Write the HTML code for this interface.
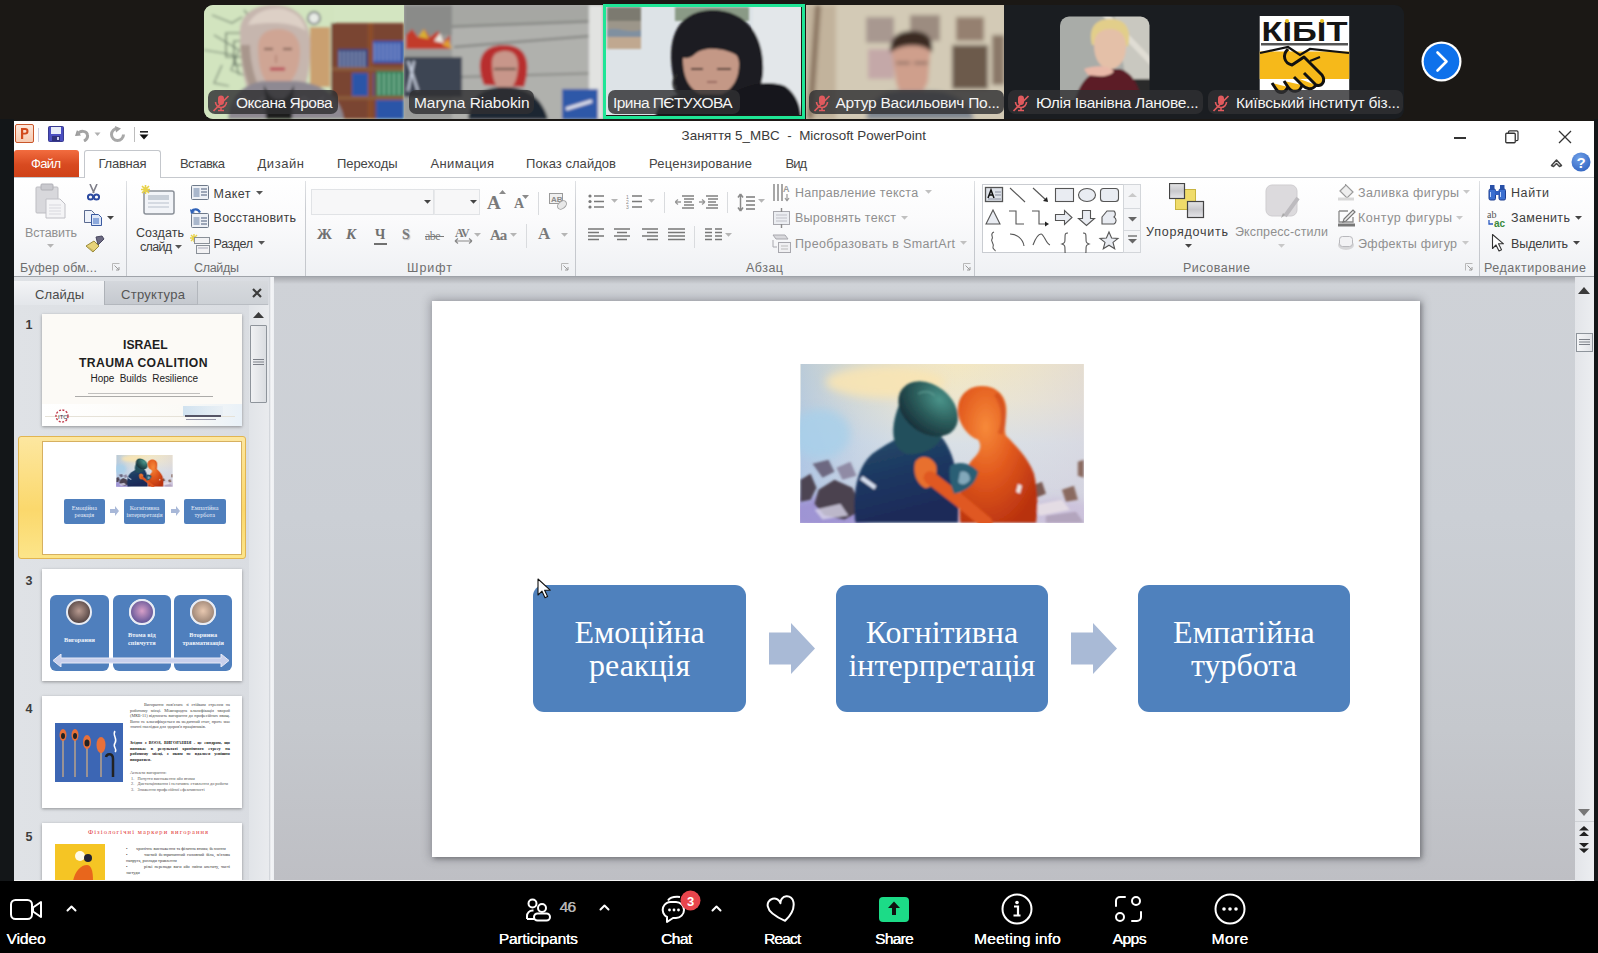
<!DOCTYPE html>
<html><head><meta charset="utf-8">
<style>
*{box-sizing:border-box;margin:0;padding:0}
html,body{width:1598px;height:953px;overflow:hidden;background:#1b1815;font-family:"Liberation Sans",sans-serif;position:relative}
.abs{position:absolute}
/* video strip */
.tile{position:absolute;top:5px;height:114px;overflow:hidden}
.lbl{position:absolute;bottom:5px;height:24px;border-radius:6px;background:rgba(28,28,28,.72);color:#fff;font-size:15px;line-height:24px;white-space:nowrap;padding-left:26px;padding-right:5px}
.mute{position:absolute;left:6px;top:4px;width:16px;height:16px}
/* ppt */
#ppt{position:absolute;left:14px;top:121px;width:1580px;height:760px;background:#fff;overflow:hidden}
.tab{position:absolute;top:35px;height:22px;font-size:13px;color:#444;line-height:22px}
.rb{position:absolute;font-size:13px;color:#333;white-space:nowrap}
.gl{position:absolute;top:138px;font-size:13px;color:#6d6d6d;white-space:nowrap}
.gsep{position:absolute;top:62px;width:1px;height:94px;background:#dadce0}
/* zoom bar */
#zb{position:absolute;left:0;top:881px;width:1598px;height:72px;background:#000}
.zl{position:absolute;top:49px;color:#fff;font-size:15px;white-space:nowrap}
</style></head><body>

<div style="position:absolute;left:204px;top:5px;width:200px;height:114px;overflow:hidden;border-radius:9px 0 0 9px"><svg width="200" height="114" viewBox="0 0 200 114" style="display:block"><defs><filter id="b1" x="-20%" y="-20%" width="140%" height="140%"><feGaussianBlur stdDeviation="1.6"/></filter></defs><rect width="200" height="114" fill="#d3e5c1"/>
<g filter="url(#b1)">
<rect x="0" y="0" width="130" height="114" fill="#d2e4bf"/>
<path d="M8 10l20 8 10-6M10 30l25 15 -8 20 25 10M0 45l30 5 5 20M18 60l-8 18 15 3M40 5l12 14" stroke="#6a7a6a" stroke-width="1.2" fill="none"/>
<path d="M22 28l24 0 0 24 -24 0z M30 36l24 0 0 24 -24 0z" stroke="#5a6a5a" stroke-width="1.2" fill="none"/>
<rect x="106" y="22" width="20" height="60" fill="#caa070"/>
<circle cx="110" cy="13" r="6" fill="#e8ece6" stroke="#556" stroke-width="1.5"/>
<rect x="127" y="18" width="73" height="96" fill="#7a4531"/>
<rect x="134" y="44" width="30" height="20" fill="#2a3f7c"/>
<path d="M136 46v17M140 46v17M144 46v17M148 46v17M152 46v17M156 46v17M160 46v17" stroke="#d8dce8" stroke-width="1"/>
<rect x="168" y="36" width="32" height="22" fill="#2c4fa8"/>
<path d="M171 38v18M175 38v18M179 38v18M183 38v18M187 38v18M191 38v18M195 38v18" stroke="#c8d4f0" stroke-width="1"/>
<rect x="148" y="68" width="22" height="24" fill="#2c55a8"/>
<rect x="172" y="66" width="28" height="26" fill="#2c7e55"/>
<path d="M175 68v22M180 68v22M185 68v22M190 68v22M195 68v22" stroke="#c8e8d4" stroke-width="1"/>
<rect x="172" y="95" width="28" height="19" fill="#2c55a8"/>
<rect x="164" y="18" width="5" height="96" fill="#8c4e2c"/>
<rect x="127" y="62" width="73" height="4" fill="#8a5a3a"/>
<rect x="127" y="91" width="73" height="4" fill="#8a5a3a"/>
<path d="M36 30 C34 6 56 -2 74 0 C96 2 108 18 106 44 C106 62 104 74 100 84 L44 86 C38 70 36 50 36 30z" fill="#c6b6ae"/>
<path d="M44 20 C50 6 66 2 80 4 C94 8 100 16 102 26 C90 18 70 16 44 20z" fill="#ddd0c6"/>
<path d="M36 40 C38 60 42 76 48 86 L56 86 C50 70 46 56 46 40z" fill="#a8968c"/>
<path d="M54 42 C54 30 62 24 74 24 C88 24 96 32 96 46 C96 64 90 80 74 82 C60 82 54 66 54 42z" fill="#cfa594"/>
<path d="M60 44h9M79 44h9" stroke="#7a5a50" stroke-width="2"/>
<path d="M72 50 v8" stroke="#b88878" stroke-width="2"/>
<path d="M66 64h15" stroke="#b84a58" stroke-width="3"/>
<path d="M24 114 C26 90 40 78 60 76 L92 76 C116 78 136 90 140 114z" fill="#8e8992"/>
<path d="M30 100 l10-8 l10 8 l10-8 l10 8 l10-8 l10 8 l10-8 l10 8 l10-8" stroke="#b8b4bc" stroke-width="2" fill="none"/>
<path d="M60 80 C64 90 70 94 74 94 C80 94 86 90 90 80 L88 114 H62z" fill="#1c1a1e"/>
</g></svg></div>
<div style="position:absolute;left:208.4px;top:90px;width:129.99999999999997px;height:24px;background:rgba(48,48,50,.82);border-radius:7px"></div><svg style="position:absolute;left:212.4px;top:93.5px;" width="18" height="18" viewBox="0 0 18 18"><rect x="6" y="1.5" width="6" height="9.5" rx="3" fill="#e05a5e"/><path d="M3.5 8a5.5 5.5 0 0 0 11 0M9 13.5V16.5M6 16.5h6" stroke="#e05a5e" stroke-width="1.6" fill="none"/><path d="M1.5 17L16.5 2" stroke="#e05a5e" stroke-width="1.7"/></svg><div style="position:absolute;left:236.0px;top:95.3px;font-family:'Liberation Sans',sans-serif;font-size:15.5px;line-height:15.5px;color:#f4f4f4;white-space:pre;letter-spacing:-0.48px;">Оксана Ярова</div>
<div style="position:absolute;left:404px;top:5px;width:199px;height:114px;overflow:hidden;"><svg width="199" height="114" viewBox="0 0 199 114" style="display:block"><defs><filter id="b2" x="-20%" y="-20%" width="140%" height="140%"><feGaussianBlur stdDeviation="1.4"/></filter></defs><rect width="199" height="114" fill="#acadaa"/>
<g filter="url(#b2)">
<path d="M40 0h160v114H40z" fill="#b0b1ad"/>
<path d="M40 0h160v16L40 22z" fill="#a6a7a3"/>
<path d="M40 22L199 16" stroke="#7e7f7c" stroke-width="2"/>
<path d="M50 42L199 30" stroke="#7e7f7c" stroke-width="2"/>
<path d="M55 72L199 68" stroke="#888985" stroke-width="2"/>
<path d="M185 0h14v114h-14z" fill="#e2e3e1"/>
<rect x="0" y="0" width="48" height="114" fill="#9b9c9a"/>
<rect x="0" y="0" width="48" height="30" fill="#8a8b89"/>
<path d="M2 30l6-6 6 8 6-8 6 8 8-6 6 10 6-6v14H2z" fill="#c23a2a"/>
<path d="M14 32l6-8 5 10z" fill="#d8b030"/>
<path d="M30 36l6-8 4 10z" fill="#e8e8e0"/>
<path d="M38 40l6-6 4 10z" fill="#e0a030"/>
<rect x="0" y="52" width="58" height="40" fill="#3e4452"/>
<path d="M4 56l10 30M10 56l-6 30" stroke="#d0d8e8" stroke-width="2"/>
<path d="M80 80 C72 60 74 40 100 40 C126 40 126 62 120 82z" fill="#b82e2e"/>
<path d="M88 58 C88 48 94 46 102 46 C110 46 114 52 114 60 C114 76 108 86 100 86 C92 86 88 74 88 58z" fill="#c8968a"/>
<path d="M90 64h22" stroke="#332" stroke-width="1.5"/>
<path d="M64 114 C66 92 78 82 100 82 C122 82 138 92 144 114z" fill="#1f2633"/>
<rect x="158" y="84" width="36" height="30" fill="#2e58a8"/>
<path d="M162 104l26-8" stroke="#e8e8f0" stroke-width="3"/>
</g></svg></div>
<div style="position:absolute;left:409px;top:90px;width:125px;height:24px;background:rgba(48,48,50,.82);border-radius:7px"></div><div style="position:absolute;left:414.0px;top:95.3px;font-family:'Liberation Sans',sans-serif;font-size:15.5px;line-height:15.5px;color:#f4f4f4;white-space:pre;letter-spacing:-0.05px;">Maryna Riabokin</div>
<div style="position:absolute;left:603px;top:4px;width:202px;height:115px;border:3.5px solid #1fe596;overflow:hidden"><svg width="195" height="108" viewBox="3 3 195 108" style="display:block"><defs><filter id="b3" x="-20%" y="-20%" width="140%" height="140%"><feGaussianBlur stdDeviation="1.3"/></filter></defs><rect width="202" height="114" fill="#dde3e7"/>
<g filter="url(#b3)">
<rect x="150" y="0" width="52" height="114" fill="#e3e7ea"/>
<rect x="4" y="3" width="34" height="42" fill="#9c968a"/>
<rect x="4" y="3" width="34" height="14" fill="#7c7a70"/>
<path d="M4 26 C14 22 24 30 38 26 V35 H4z" fill="#8090a0"/>
<rect x="4" y="33" width="34" height="12" fill="#c0a890"/>
<rect x="72" y="3" width="74" height="14" fill="#8a9a86"/>
<path d="M70 72 C64 40 70 8 108 6 C146 6 162 34 160 70 C158 84 154 92 148 96 L80 96 C74 90 72 82 70 72z" fill="#1d1c21"/>
<path d="M80 56 C80 46 90 42 108 42 C126 42 136 48 136 60 C136 80 124 92 108 92 C92 92 80 80 80 56z" fill="#c49886"/>
<path d="M78 52 C84 34 100 28 118 32 C130 34 138 44 138 54 C128 46 104 40 92 50 C88 54 82 56 78 52z" fill="#1d1c21"/>
<path d="M88 65h12M114 65h14" stroke="#4a3430" stroke-width="2.2"/>
<path d="M104 78h10" stroke="#9a6a60" stroke-width="2"/>
<path d="M74 70 C68 78 70 88 80 92" stroke="#2a2a2a" stroke-width="2.5" fill="none"/>
<path d="M52 114 C56 96 70 88 92 90 L126 90 C140 84 160 74 182 82 C194 90 198 104 198 114z" fill="#16151a"/>
</g></svg></div>
<div style="position:absolute;left:608px;top:90px;width:132px;height:24px;background:rgba(48,48,50,.82);border-radius:7px"></div><div style="position:absolute;left:613.0px;top:95.3px;font-family:'Liberation Sans',sans-serif;font-size:15.5px;line-height:15.5px;color:#f4f4f4;white-space:pre;letter-spacing:-0.55px;">Ірина ПЄТУХОВА</div>
<div style="position:absolute;left:806px;top:5px;width:198px;height:114px;overflow:hidden;"><svg width="198" height="114" viewBox="0 0 198 114" style="display:block"><defs><filter id="b4" x="-20%" y="-20%" width="140%" height="140%"><feGaussianBlur stdDeviation="2.2"/></filter></defs><rect width="198" height="114" fill="#cfc6b1"/>
<g filter="url(#b4)">
<rect x="0" y="0" width="198" height="114" fill="#d3cab6"/>
<rect x="0" y="0" width="30" height="114" fill="#c2b39c"/>
<path d="M12 0 L4 114" stroke="#8a7460" stroke-width="6"/>
<rect x="60" y="12" width="28" height="26" fill="#a89890"/>
<rect x="62" y="44" width="26" height="30" fill="#c4a8a8"/>
<rect x="104" y="10" width="30" height="26" fill="#9c8c80"/>
<rect x="150" y="12" width="28" height="24" fill="#958070"/>
<rect x="146" y="40" width="36" height="44" fill="#6c5a4c"/>
<rect x="186" y="30" width="12" height="50" fill="#8a7868"/>
<g transform="translate(-6,2)"><path d="M92 46 C90 32 98 26 112 26 C126 26 132 34 130 48 L128 74 C124 86 118 90 112 90 C104 90 98 86 96 74z" fill="#cf9f8c"/>
<path d="M90 46 C90 28 100 24 112 24 C126 24 134 30 132 46 C126 36 100 36 90 46z" fill="#3a2a22"/>
<path d="M96 56h14M114 56h14" stroke="#6a5a50" stroke-width="2"/></g>
<path d="M60 114 C62 96 76 86 96 86 L128 86 C150 88 164 98 168 114z" fill="#7e8590"/>
</g></svg></div>
<div style="position:absolute;left:808.5px;top:90px;width:195.20000000000005px;height:24px;background:rgba(48,48,50,.82);border-radius:7px"></div><svg style="position:absolute;left:812.5px;top:93.5px;" width="18" height="18" viewBox="0 0 18 18"><rect x="6" y="1.5" width="6" height="9.5" rx="3" fill="#e05a5e"/><path d="M3.5 8a5.5 5.5 0 0 0 11 0M9 13.5V16.5M6 16.5h6" stroke="#e05a5e" stroke-width="1.6" fill="none"/><path d="M1.5 17L16.5 2" stroke="#e05a5e" stroke-width="1.7"/></svg><div style="position:absolute;left:835.5px;top:95.3px;font-family:'Liberation Sans',sans-serif;font-size:15.5px;line-height:15.5px;color:#f4f4f4;white-space:pre;letter-spacing:-0.24px;">Артур Васильович По...</div>
<div style="position:absolute;left:1004px;top:5px;width:200px;height:114px;overflow:hidden;"><svg width="200" height="114" viewBox="0 0 200 114" style="display:block"><rect width="200" height="114" fill="#1a1d21"/>
<defs><clipPath id="c5"><path d="M56 95V20.5a9 9 0 0 1 9-9h71.5a9 9 0 0 1 9 9V95z"/></clipPath><filter id="b5"><feGaussianBlur stdDeviation="1.3"/></filter></defs>
<g clip-path="url(#c5)"><g filter="url(#b5)">
<rect x="50" y="8" width="100" height="110" fill="#a9aca8"/>
<path d="M110 8h40v110h-20z" fill="#c9c8c0"/>
<path d="M100 8 L150 60" stroke="#e0ddd4" stroke-width="6"/>
<rect x="130" y="74" width="20" height="40" fill="#2a2a2c"/>
<path d="M88 40 C84 22 92 14 106 14 C122 14 128 24 124 42 L118 38 C110 30 96 30 90 40z" fill="#e2ce8a"/>
<path d="M90 40 C90 28 98 24 106 24 C116 24 122 30 122 42 C122 56 114 64 106 64 C98 64 90 56 90 40z" fill="#e4c0a8"/>
<path d="M68 114 C70 86 80 68 100 64 L116 64 C130 68 138 84 140 114z" fill="#5c1c26"/>
<path d="M80 64 C92 60 104 60 110 66 C106 72 96 72 84 70z" fill="#e8b8a8"/>
</g></g></svg></div>
<div style="position:absolute;left:1008px;top:90px;width:194.70000000000005px;height:24px;background:rgba(48,48,50,.82);border-radius:7px"></div><svg style="position:absolute;left:1012px;top:93.5px;" width="18" height="18" viewBox="0 0 18 18"><rect x="6" y="1.5" width="6" height="9.5" rx="3" fill="#e05a5e"/><path d="M3.5 8a5.5 5.5 0 0 0 11 0M9 13.5V16.5M6 16.5h6" stroke="#e05a5e" stroke-width="1.6" fill="none"/><path d="M1.5 17L16.5 2" stroke="#e05a5e" stroke-width="1.7"/></svg><div style="position:absolute;left:1036.0px;top:95.3px;font-family:'Liberation Sans',sans-serif;font-size:15.5px;line-height:15.5px;color:#f4f4f4;white-space:pre;letter-spacing:-0.27px;">Юлія Іванівна Ланове...</div>
<div style="position:absolute;left:1204px;top:5px;width:200px;height:114px;overflow:hidden;border-radius:0 9px 9px 0"><svg width="200" height="114" viewBox="0 0 200 114" style="display:block"><rect width="200" height="114" fill="#1a1d21"/>
<rect x="55.7" y="11" width="89.5" height="84" fill="#fff"/>
<rect x="55.7" y="46.5" width="89.5" height="27.5" fill="#f6b91a"/>

<text x="100.5" y="35.5" text-anchor="middle" font-family="Liberation Sans" font-weight="bold" font-size="27" fill="#151515" textLength="86" lengthAdjust="spacingAndGlyphs">КІБІТ</text>
<circle cx="83" cy="16" r="2" fill="#e8c020"/><circle cx="118" cy="16" r="2" fill="#e8c020"/>
<rect x="57" y="38" width="87" height="2.5" fill="#555"/>
<path d="M56 48 L84 42 L96 50 L106 44 L145 48" stroke="#111" stroke-width="2.2" fill="none"/>
<path d="M84 44 C78 50 80 58 88 60 L100 52 L118 70 C122 76 118 82 112 80 L100 68 M112 80 C108 86 102 84 98 80 L90 72 M98 80 C96 88 88 88 84 82 L80 76 M84 82 C80 90 74 88 72 84 L68 78" stroke="#111" stroke-width="3" fill="#f6b91a" stroke-linejoin="round"/>
<path d="M106 56 L116 52" stroke="#111" stroke-width="2.2"/></svg></div>
<div style="position:absolute;left:1208px;top:90px;width:194.70000000000005px;height:24px;background:rgba(48,48,50,.82);border-radius:7px"></div><svg style="position:absolute;left:1212px;top:93.5px;" width="18" height="18" viewBox="0 0 18 18"><rect x="6" y="1.5" width="6" height="9.5" rx="3" fill="#e05a5e"/><path d="M3.5 8a5.5 5.5 0 0 0 11 0M9 13.5V16.5M6 16.5h6" stroke="#e05a5e" stroke-width="1.6" fill="none"/><path d="M1.5 17L16.5 2" stroke="#e05a5e" stroke-width="1.7"/></svg><div style="position:absolute;left:1236.0px;top:95.3px;font-family:'Liberation Sans',sans-serif;font-size:15.5px;line-height:15.5px;color:#f4f4f4;white-space:pre;letter-spacing:-0.19px;">Київський інститут біз...</div>
<svg style="position:absolute;left:1421px;top:41px;" width="41" height="41" viewBox="0 0 41 41"><circle cx="20.5" cy="20.5" r="20" fill="#fff"/><circle cx="20.5" cy="20.5" r="17.8" fill="#0e71eb"/><path d="M16.5 11.5 L25.5 20.5 L16.5 29.5" stroke="#fff" stroke-width="2.6" fill="none" stroke-linecap="round" stroke-linejoin="round"/></svg>
<div style="position:absolute;left:0px;top:119px;width:14px;height:762px;background:#131618"></div>
<div style="position:absolute;left:1594px;top:119px;width:4px;height:762px;background:#131618"></div>
<div style="position:absolute;left:14px;top:121px;width:1580px;height:760px;background:#fff"></div>
<svg style="position:absolute;left:15px;top:124px;" width="19" height="19" viewBox="0 0 19 19"><defs><linearGradient id="pg" x1="0" y1="0" x2="0" y2="1"><stop offset="0" stop-color="#fde8dc"/><stop offset="1" stop-color="#f6c9b0"/></linearGradient></defs><rect x="0.5" y="0.5" width="18" height="18" rx="1.5" fill="url(#pg)" stroke="#c9562a"/><path d="M6 15V4h4.2a3.3 3.3 0 0 1 0 6.6H8.2V15z M8.2 6v2.7h1.9a1.35 1.35 0 0 0 0-2.7z" fill="#d24a1c"/></svg>
<div style="position:absolute;left:38px;top:128px;width:1px;height:14px;background:#cfcfe0"></div>
<svg style="position:absolute;left:48px;top:126px;" width="16" height="16" viewBox="0 0 16 16"><rect x="0.5" y="0.5" width="15" height="15" rx="1" fill="#4a4ec0" stroke="#383a90"/><rect x="3" y="1" width="10" height="7" fill="#e8ecf8"/><rect x="4" y="10" width="8" height="5" fill="#2e307a"/><rect x="9" y="11" width="2" height="3" fill="#c8cce8"/></svg>
<svg style="position:absolute;left:73px;top:126px;" width="17" height="16" viewBox="0 0 17 16"><path d="M4 4 L2 10 L8 9.5" fill="#9a9a9a"/><path d="M4.5 8.5 C7 4 14 4.5 14.5 9 C15 12 13 14 11 15" stroke="#a3a3a3" stroke-width="3" fill="none"/></svg>
<svg style="position:absolute;left:94px;top:132px;" width="7" height="5" viewBox="0 0 7 5"><path d="M0.5 0.5h6L3.5 4z" fill="#b0b0b0"/></svg>
<svg style="position:absolute;left:109px;top:126px;" width="17" height="16" viewBox="0 0 17 16"><path d="M8.5 2.5a6 6 0 1 0 6 6" stroke="#a8a8a8" stroke-width="3" fill="none"/><path d="M6 0 L12 2.5 L7 6.5z" fill="#a0a0a0"/></svg>
<div style="position:absolute;left:134px;top:127px;width:1px;height:15px;background:#bdbdbd"></div>
<svg style="position:absolute;left:139px;top:130px;" width="10" height="11" viewBox="0 0 10 11"><rect x="1" y="1" width="8" height="1.6" fill="#222"/><path d="M0.5 4.5h9L5 9.5z" fill="#111"/></svg>
<div style="position:absolute;left:681.6px;top:129.3px;font-family:'Liberation Sans',sans-serif;font-size:13.4px;line-height:13.4px;color:#3a3a3a;white-space:pre;letter-spacing:0.01px;">Заняття 5_MBC  -  Microsoft PowerPoint</div>
<div style="position:absolute;left:1454px;top:137px;width:12px;height:1.5px;background:#333"></div>
<svg style="position:absolute;left:1505px;top:130px;" width="14" height="14" viewBox="0 0 14 14"><rect x="0.75" y="3.25" width="9.5" height="9.5" rx="1" fill="none" stroke="#333" stroke-width="1.3"/><path d="M3.5 3 V2 a1.2 1.2 0 0 1 1.2-1.2 H11.8 a1.2 1.2 0 0 1 1.2 1.2 V9.5 a1.2 1.2 0 0 1 -1.2 1.2 H11" fill="none" stroke="#333" stroke-width="1.2"/></svg>
<svg style="position:absolute;left:1558px;top:130px;" width="14" height="14" viewBox="0 0 14 14"><path d="M1 1L13 13M13 1L1 13" stroke="#333" stroke-width="1.3"/></svg>
<svg style="position:absolute;left:1550px;top:157px;" width="13" height="11" viewBox="0 0 13 11"><path d="M1.5 8.5 L6.5 3 L11.5 8.5 L9.5 9.5 L6.5 6.5 L3.5 9.5z" fill="none" stroke="#444" stroke-width="1.5" stroke-linejoin="round"/></svg>
<svg style="position:absolute;left:1571px;top:152px;" width="20" height="20" viewBox="0 0 20 20"><defs><radialGradient id="hg" cx="0.4" cy="0.3" r="0.8"><stop offset="0" stop-color="#6fa0e8"/><stop offset="1" stop-color="#2f62c0"/></radialGradient></defs><circle cx="10" cy="10" r="9.5" fill="url(#hg)"/><text x="10" y="15.5" text-anchor="middle" font-family="Liberation Sans" font-weight="bold" font-size="15" fill="#fff">?</text></svg>
<div style="position:absolute;left:14px;top:150px;width:65px;height:27px;background:linear-gradient(#f26c3f,#d84a20 55%,#cf4218);border-radius:3px 3px 0 0"></div>
<div style="position:absolute;left:31.0px;top:156.5px;font-family:'Liberation Sans',sans-serif;font-size:13.0px;line-height:13.0px;color:#fff;white-space:pre;letter-spacing:-0.65px;">Файл</div>
<div style="position:absolute;left:84px;top:150px;width:77px;height:28px;background:#fff;border:1px solid #c4c7cc;border-bottom:none;border-radius:3px 3px 0 0;z-index:2"></div>
<div style="position:absolute;left:98.5px;top:156.5px;font-family:'Liberation Sans',sans-serif;font-size:13.0px;line-height:13.0px;color:#444;white-space:pre;letter-spacing:-0.25px;z-index:3">Главная</div>
<div style="position:absolute;left:180.0px;top:156.5px;font-family:'Liberation Sans',sans-serif;font-size:13.0px;line-height:13.0px;color:#444;white-space:pre;letter-spacing:-0.55px;">Вставка</div>
<div style="position:absolute;left:257.5px;top:156.5px;font-family:'Liberation Sans',sans-serif;font-size:13.0px;line-height:13.0px;color:#444;white-space:pre;letter-spacing:0.56px;">Дизайн</div>
<div style="position:absolute;left:337.0px;top:156.5px;font-family:'Liberation Sans',sans-serif;font-size:13.0px;line-height:13.0px;color:#444;white-space:pre;letter-spacing:-0.07px;">Переходы</div>
<div style="position:absolute;left:430.5px;top:156.5px;font-family:'Liberation Sans',sans-serif;font-size:13.0px;line-height:13.0px;color:#444;white-space:pre;letter-spacing:0.35px;">Анимация</div>
<div style="position:absolute;left:526.0px;top:156.5px;font-family:'Liberation Sans',sans-serif;font-size:13.0px;line-height:13.0px;color:#444;white-space:pre;letter-spacing:0.04px;">Показ слайдов</div>
<div style="position:absolute;left:649.0px;top:156.5px;font-family:'Liberation Sans',sans-serif;font-size:13.0px;line-height:13.0px;color:#444;white-space:pre;letter-spacing:0.20px;">Рецензирование</div>
<div style="position:absolute;left:785.6px;top:156.5px;font-family:'Liberation Sans',sans-serif;font-size:13.0px;line-height:13.0px;color:#444;white-space:pre;letter-spacing:-1.06px;">Вид</div>
<div style="position:absolute;left:14px;top:177px;width:1580px;height:101px;background:linear-gradient(#ffffff 0%,#fbfbfc 40%,#eff1f4 100%);border-top:1px solid #c6c9ce;border-bottom:2px solid #9fa3a9"></div>
<div style="position:absolute;left:126px;top:181px;width:1px;height:95px;background:linear-gradient(#dfe1e4,#c9ccd1 30%,#c4c7cc)"></div>
<div style="position:absolute;left:305px;top:181px;width:1px;height:95px;background:linear-gradient(#dfe1e4,#c9ccd1 30%,#c4c7cc)"></div>
<div style="position:absolute;left:575px;top:181px;width:1px;height:95px;background:linear-gradient(#dfe1e4,#c9ccd1 30%,#c4c7cc)"></div>
<div style="position:absolute;left:974px;top:181px;width:1px;height:95px;background:linear-gradient(#dfe1e4,#c9ccd1 30%,#c4c7cc)"></div>
<div style="position:absolute;left:1479px;top:181px;width:1px;height:95px;background:linear-gradient(#dfe1e4,#c9ccd1 30%,#c4c7cc)"></div>
<svg style="position:absolute;left:112px;top:263px;" width="8" height="8" viewBox="0 0 8 8"><path d="M0.5 7.5V0.5H7.5" stroke="#b8b8b8" fill="none"/><path d="M2.5 2.5L7 7M7 4v3H4" stroke="#9a9a9a" fill="none"/></svg>
<svg style="position:absolute;left:561px;top:263px;" width="8" height="8" viewBox="0 0 8 8"><path d="M0.5 7.5V0.5H7.5" stroke="#b8b8b8" fill="none"/><path d="M2.5 2.5L7 7M7 4v3H4" stroke="#9a9a9a" fill="none"/></svg>
<svg style="position:absolute;left:963px;top:263px;" width="8" height="8" viewBox="0 0 8 8"><path d="M0.5 7.5V0.5H7.5" stroke="#b8b8b8" fill="none"/><path d="M2.5 2.5L7 7M7 4v3H4" stroke="#9a9a9a" fill="none"/></svg>
<svg style="position:absolute;left:1465px;top:263px;" width="8" height="8" viewBox="0 0 8 8"><path d="M0.5 7.5V0.5H7.5" stroke="#b8b8b8" fill="none"/><path d="M2.5 2.5L7 7M7 4v3H4" stroke="#9a9a9a" fill="none"/></svg>
<div style="position:absolute;left:20.0px;top:261.6px;font-family:'Liberation Sans',sans-serif;font-size:12.5px;line-height:12.5px;color:#6e6e6e;white-space:pre;letter-spacing:0.22px;">Буфер обм...</div>
<div style="position:absolute;left:194.0px;top:261.6px;font-family:'Liberation Sans',sans-serif;font-size:12.5px;line-height:12.5px;color:#6e6e6e;white-space:pre;letter-spacing:-0.31px;">Слайды</div>
<div style="position:absolute;left:407.0px;top:261.6px;font-family:'Liberation Sans',sans-serif;font-size:12.5px;line-height:12.5px;color:#6e6e6e;white-space:pre;letter-spacing:0.97px;">Шрифт</div>
<div style="position:absolute;left:746.0px;top:261.6px;font-family:'Liberation Sans',sans-serif;font-size:12.5px;line-height:12.5px;color:#6e6e6e;white-space:pre;letter-spacing:0.48px;">Абзац</div>
<div style="position:absolute;left:1183.0px;top:261.6px;font-family:'Liberation Sans',sans-serif;font-size:12.5px;line-height:12.5px;color:#6e6e6e;white-space:pre;letter-spacing:0.51px;">Рисование</div>
<div style="position:absolute;left:1484.0px;top:261.6px;font-family:'Liberation Sans',sans-serif;font-size:12.5px;line-height:12.5px;color:#6e6e6e;white-space:pre;letter-spacing:0.52px;">Редактирование</div>
<svg style="position:absolute;left:35px;top:183px;" width="32" height="36" viewBox="0 0 32 36"><rect x="1" y="4" width="22" height="26" rx="1" fill="#d8d8dc" stroke="#bdbdc2"/><rect x="6" y="1" width="12" height="6" rx="1" fill="#c9c9ce" stroke="#b0b0b6"/><path d="M11 16h14l5 5v14H11z" fill="#f4f4f6" stroke="#c0c0c6"/><path d="M14 22h12M14 25h12M14 28h12M14 31h12" stroke="#d8d8de"/></svg>
<div style="position:absolute;left:25.0px;top:226.9px;font-family:'Liberation Sans',sans-serif;font-size:12.5px;line-height:12.5px;color:#8f8f8f;white-space:pre;letter-spacing:-0.14px;">Вставить</div>
<svg style="position:absolute;left:47px;top:244px;" width="7" height="4" viewBox="0 0 7 4"><path d="M0 0h7L3.5 3.8z" fill="#b5b5b5"/></svg>
<svg style="position:absolute;left:87px;top:184px;" width="13" height="17" viewBox="0 0 13 17"><path d="M3 0L7 9M10 0L6 9" stroke="#7d7d88" stroke-width="1.6"/><circle cx="3.5" cy="13" r="2.6" fill="none" stroke="#2c4aa0" stroke-width="2"/><circle cx="9.5" cy="13" r="2.6" fill="none" stroke="#2c4aa0" stroke-width="2"/></svg>
<svg style="position:absolute;left:84px;top:210px;" width="19" height="16" viewBox="0 0 19 16"><path d="M0.5 0.5h7l3 3v9h-10z" fill="#eef2fa" stroke="#5a6a90"/><path d="M7.5 4.5h7l3 3v8h-10z" fill="#dfe8f8" stroke="#3a5aa0"/><path d="M9 9h6M9 11h6M9 13h6" stroke="#3a6ac0"/></svg>
<svg style="position:absolute;left:107px;top:216px;" width="7" height="4" viewBox="0 0 7 4"><path d="M0 0h7L3.5 3.8z" fill="#444"/></svg>
<svg style="position:absolute;left:84px;top:235px;" width="21" height="18" viewBox="0 0 21 18"><path d="M12 2l6-1 2 3-6 6z" fill="#6a6880" stroke="#4a4860"/><path d="M2 11l8-5 5 5-6 6z" fill="#e7d37a" stroke="#9a8a3a"/><path d="M4 12l6 4" stroke="#c7b35a"/></svg>
<svg style="position:absolute;left:140px;top:185px;" width="36" height="31" viewBox="0 0 36 31"><rect x="4" y="6" width="30" height="23" rx="2" fill="#f2f4f8" stroke="#8a9098" stroke-width="1.5"/><rect x="8" y="10" width="21" height="5" fill="#c8cfd8"/><path d="M8 18h21M8 22h21" stroke="#b8c0cc"/><path d="M2 1l7 7M9 1L2 8M5.5 0v9M1 4.5h9" stroke="#e8d24a" stroke-width="1.6"/></svg>
<div style="position:absolute;left:136.0px;top:226.6px;font-family:'Liberation Sans',sans-serif;font-size:12.5px;line-height:12.5px;color:#3d3d3d;white-space:pre;letter-spacing:0.08px;">Создать</div>
<div style="position:absolute;left:140.0px;top:241.4px;font-family:'Liberation Sans',sans-serif;font-size:12.5px;line-height:12.5px;color:#3d3d3d;white-space:pre;letter-spacing:-0.69px;">слайд</div>
<svg style="position:absolute;left:175px;top:245px;" width="7" height="4" viewBox="0 0 7 4"><path d="M0 0h7L3.5 3.8z" fill="#555"/></svg>
<svg style="position:absolute;left:191px;top:185px;" width="18" height="15" viewBox="0 0 18 15"><rect x="0.5" y="0.5" width="17" height="14" rx="1" fill="#eef1f6" stroke="#6f7a8a"/><rect x="2.5" y="3" width="6" height="9" fill="#a9b7cc"/><path d="M10 4h6M10 7h6M10 10h6" stroke="#4a5a78"/></svg>
<div style="position:absolute;left:213.6px;top:187.8px;font-family:'Liberation Sans',sans-serif;font-size:12.5px;line-height:12.5px;color:#3d3d3d;white-space:pre;letter-spacing:0.36px;">Макет</div>
<svg style="position:absolute;left:256px;top:191px;" width="7" height="4" viewBox="0 0 7 4"><path d="M0 0h7L3.5 3.8z" fill="#555"/></svg>
<svg style="position:absolute;left:190px;top:208px;" width="20" height="20" viewBox="0 0 20 20"><rect x="1.5" y="5.5" width="17" height="14" rx="1" fill="#eef1f6" stroke="#6f7a8a"/><rect x="3.5" y="9" width="6" height="8" fill="#a9b7cc"/><path d="M11 10h6M11 13h6M11 16h6" stroke="#4a5a78"/><path d="M1 3.5c3-3 7-3 9 1" stroke="#2f62b8" stroke-width="2.2" fill="none"/><path d="M0 1l1 5 4-2z" fill="#2f62b8"/></svg>
<div style="position:absolute;left:213.6px;top:212.4px;font-family:'Liberation Sans',sans-serif;font-size:12.5px;line-height:12.5px;color:#3d3d3d;white-space:pre;letter-spacing:0.21px;">Восстановить</div>
<svg style="position:absolute;left:190px;top:233px;" width="20" height="21" viewBox="0 0 20 21"><path d="M1 2l6 6M7 2L1 8M4 1v8M0 5h8" stroke="#e8d24a" stroke-width="1.4"/><rect x="4.5" y="4.5" width="15" height="6" fill="#f2f2f4" stroke="#8a9098"/><rect x="6.5" y="12.5" width="13" height="8" fill="#f2f2f4" stroke="#8a9098"/><path d="M8 15h10" stroke="#aab"/></svg>
<div style="position:absolute;left:213.6px;top:237.9px;font-family:'Liberation Sans',sans-serif;font-size:12.5px;line-height:12.5px;color:#3d3d3d;white-space:pre;letter-spacing:-0.38px;">Раздел</div>
<svg style="position:absolute;left:258px;top:241px;" width="7" height="4" viewBox="0 0 7 4"><path d="M0 0h7L3.5 3.8z" fill="#555"/></svg>
<div style="position:absolute;left:311px;top:189px;width:123px;height:26px;background:#f7f7f8;border:1px solid #e1e3e6"></div>
<div style="position:absolute;left:434px;top:189px;width:46px;height:26px;background:#f7f7f8;border:1px solid #e1e3e6;border-left:1px solid #e8e9eb"></div>
<svg style="position:absolute;left:424px;top:200px;" width="7" height="4" viewBox="0 0 7 4"><path d="M0 0h7L3.5 3.8z" fill="#444"/></svg>
<svg style="position:absolute;left:470px;top:200px;" width="7" height="4" viewBox="0 0 7 4"><path d="M0 0h7L3.5 3.8z" fill="#444"/></svg>
<div style="position:absolute;left:487px;top:192.9px;font-family:'Liberation Serif',serif;font-size:19px;line-height:19px;color:#7a7a7a;white-space:nowrap;font-weight:bold">A</div>
<svg style="position:absolute;left:499px;top:190px;" width="7" height="4" viewBox="0 0 7 4"><path d="M0 4L3.5 0 7 4z" fill="#8a8a8a"/></svg>
<div style="position:absolute;left:514px;top:197.1px;font-family:'Liberation Serif',serif;font-size:14px;line-height:14px;color:#7a7a7a;white-space:nowrap;font-weight:bold">A</div>
<svg style="position:absolute;left:522px;top:195px;" width="7" height="4" viewBox="0 0 7 4"><path d="M0 0h7L3.5 4z" fill="#8a8a8a"/></svg>
<div style="position:absolute;left:538px;top:192px;width:1px;height:23px;background:#d9dbde"></div>
<svg style="position:absolute;left:548px;top:192px;" width="20" height="19" viewBox="0 0 20 19"><rect x="1.5" y="1.5" width="13" height="10" fill="#f0f0f0" stroke="#9a9a9a"/><text x="3" y="10" font-family="Liberation Sans" font-weight="bold" font-size="8" fill="#8a8a8a">AB</text><ellipse cx="14" cy="13" rx="5" ry="3.5" transform="rotate(-40 14 13)" fill="#e8e8e8" stroke="#a0a0a0"/></svg>
<div style="position:absolute;left:317px;top:227.3px;font-family:'Liberation Serif',serif;font-size:15px;line-height:15px;color:#707070;white-space:nowrap;font-weight:bold">Ж</div>
<div style="position:absolute;left:346px;top:227.3px;font-family:'Liberation Serif',serif;font-size:15px;line-height:15px;color:#707070;white-space:nowrap;font-weight:bold;font-style:italic">К</div>
<div style="position:absolute;left:375px;top:228.1px;font-family:'Liberation Serif',serif;font-size:14px;line-height:14px;color:#707070;white-space:nowrap;font-weight:bold">Ч</div>
<div style="position:absolute;left:374px;top:243px;width:13px;height:1.5px;background:#707070"></div>
<div style="position:absolute;left:402px;top:228.1px;font-family:'Liberation Serif',serif;font-size:14px;line-height:14px;color:#7a7a7a;white-space:nowrap;font-weight:bold;text-shadow:1px 1px 1px #bbb">S</div>
<div style="position:absolute;left:425px;top:229.8px;font-family:'Liberation Serif',serif;font-size:12px;line-height:12px;color:#7a7a7a;white-space:nowrap;letter-spacing:-0.5px">abe</div>
<div style="position:absolute;left:425px;top:236px;width:19px;height:1px;background:#7a7a7a"></div>
<div style="position:absolute;left:455px;top:226.8px;font-family:'Liberation Serif',serif;font-size:12px;line-height:12px;color:#7a7a7a;white-space:nowrap;font-weight:bold;letter-spacing:-1px">AV</div>
<svg style="position:absolute;left:454px;top:238px;" width="19" height="6" viewBox="0 0 19 6"><path d="M1 3h17M1 3l3-2.5M1 3l3 2.5M18 3l-3-2.5M18 3l-3 2.5" stroke="#8a8a8a" stroke-width="1.2" fill="none"/></svg>
<svg style="position:absolute;left:474px;top:233px;" width="7" height="4" viewBox="0 0 7 4"><path d="M0 0h7L3.5 3.8z" fill="#b5b5b5"/></svg>
<div style="position:absolute;left:490px;top:228.3px;font-family:'Liberation Serif',serif;font-size:15px;line-height:15px;color:#7a7a7a;white-space:nowrap;font-weight:bold;letter-spacing:-1px">Aa</div>
<svg style="position:absolute;left:510px;top:233px;" width="7" height="4" viewBox="0 0 7 4"><path d="M0 0h7L3.5 3.8z" fill="#b5b5b5"/></svg>
<div style="position:absolute;left:526px;top:224px;width:1px;height:24px;background:#d9dbde"></div>
<div style="position:absolute;left:538px;top:224.6px;font-family:'Liberation Serif',serif;font-size:17px;line-height:17px;color:#7a7a7a;white-space:nowrap;font-weight:bold">A</div>
<svg style="position:absolute;left:561px;top:233px;" width="7" height="4" viewBox="0 0 7 4"><path d="M0 0h7L3.5 3.8z" fill="#b5b5b5"/></svg>
<svg style="position:absolute;left:588px;top:194px;" width="16" height="15" viewBox="0 0 16 15"><circle cx="2" cy="2" r="1.6" fill="#7a7a7a"/><circle cx="2" cy="7.5" r="1.6" fill="#7a7a7a"/><circle cx="2" cy="13" r="1.6" fill="#7a7a7a"/><path d="M6 2h10M6 7.5h10M6 13h10" stroke="#7a7a7a" stroke-width="1.5"/></svg>
<svg style="position:absolute;left:611px;top:199px;" width="7" height="4" viewBox="0 0 7 4"><path d="M0 0h7L3.5 3.8z" fill="#b5b5b5"/></svg>
<svg style="position:absolute;left:626px;top:194px;" width="16" height="16" viewBox="0 0 16 16"><text x="0" y="5" font-size="5" font-family="Liberation Sans" fill="#8a8a8a">1</text><text x="0" y="10" font-size="5" font-family="Liberation Sans" fill="#8a8a8a">2</text><text x="0" y="15" font-size="5" font-family="Liberation Sans" fill="#8a8a8a">3</text><path d="M6 2h10M6 7.5h10M6 13h10" stroke="#7a7a7a" stroke-width="1.5"/></svg>
<svg style="position:absolute;left:648px;top:199px;" width="7" height="4" viewBox="0 0 7 4"><path d="M0 0h7L3.5 3.8z" fill="#b5b5b5"/></svg>
<div style="position:absolute;left:664px;top:192px;width:1px;height:21px;background:#d9dbde"></div>
<svg style="position:absolute;left:675px;top:193px;" width="19" height="18" viewBox="0 0 19 18"><path d="M7 3h12M9 6h10M9 9h8M9 12h10M7 15h12" stroke="#808080" stroke-width="1.5"/><path d="M6 9H0M0 9l3-2.5M0 9l3 2.5" stroke="#999" stroke-width="1.3" fill="none"/></svg>
<svg style="position:absolute;left:699px;top:193px;" width="19" height="18" viewBox="0 0 19 18"><path d="M7 3h12M9 6h10M9 9h8M9 12h10M7 15h12" stroke="#808080" stroke-width="1.5"/><path d="M0 9h6M6 9l-3-2.5M6 9l-3 2.5" stroke="#999" stroke-width="1.3" fill="none"/></svg>
<div style="position:absolute;left:727px;top:192px;width:1px;height:21px;background:#d9dbde"></div>
<svg style="position:absolute;left:737px;top:193px;" width="19" height="19" viewBox="0 0 19 19"><path d="M3.5 1v17M3.5 1L1 4.5M3.5 1L6 4.5M3.5 18L1 14.5M3.5 18L6 14.5" stroke="#8a8a8a" stroke-width="1.5" fill="none"/><path d="M9 4h9M9 8h9M9 12h9M9 16h9" stroke="#7a7a7a" stroke-width="1.5"/></svg>
<svg style="position:absolute;left:758px;top:199px;" width="7" height="4" viewBox="0 0 7 4"><path d="M0 0h7L3.5 3.8z" fill="#b5b5b5"/></svg>
<svg style="position:absolute;left:588px;top:228px;" width="16" height="13" viewBox="0 0 16 13"><path d="M0 1h16M0 4.5h11M0 8h16M0 11.5h11" stroke="#777" stroke-width="1.6"/></svg>
<svg style="position:absolute;left:614px;top:228px;" width="16" height="13" viewBox="0 0 16 13"><path d="M0 1h16M3 4.5h10M0 8h16M3 11.5h10" stroke="#777" stroke-width="1.6"/></svg>
<svg style="position:absolute;left:642px;top:228px;" width="16" height="13" viewBox="0 0 16 13"><path d="M0 1h16M5 4.5h11M0 8h16M5 11.5h11" stroke="#777" stroke-width="1.6"/></svg>
<svg style="position:absolute;left:668px;top:228px;" width="17" height="13" viewBox="0 0 17 13"><path d="M0 1h17M0 4.5h17M0 8h17M0 11.5h17" stroke="#777" stroke-width="1.6"/></svg>
<div style="position:absolute;left:694px;top:226px;width:1px;height:22px;background:#d9dbde"></div>
<svg style="position:absolute;left:705px;top:228px;" width="17" height="13" viewBox="0 0 17 13"><path d="M0 1h7M0 4.5h7M0 8h7M0 11.5h7M10 1h7M10 4.5h7M10 8h7M10 11.5h7" stroke="#777" stroke-width="1.6"/></svg>
<svg style="position:absolute;left:725px;top:233px;" width="7" height="4" viewBox="0 0 7 4"><path d="M0 0h7L3.5 3.8z" fill="#b5b5b5"/></svg>
<svg style="position:absolute;left:772px;top:183px;" width="19" height="19" viewBox="0 0 19 19"><path d="M2 1v17M6 1v17M10 1v17" stroke="#8a8a8a" stroke-width="1.5"/><text x="11" y="9" font-size="9" font-weight="bold" font-family="Liberation Sans" fill="#999">A</text><path d="M15 11v7M15 18l-2-3M15 18l2-3" stroke="#999" stroke-width="1.2" fill="none"/></svg>
<div style="position:absolute;left:795.0px;top:186.9px;font-family:'Liberation Sans',sans-serif;font-size:12.5px;line-height:12.5px;color:#8f8f8f;white-space:pre;letter-spacing:0.27px;">Направление текста</div>
<svg style="position:absolute;left:925px;top:190px;" width="7" height="4" viewBox="0 0 7 4"><path d="M0 0h7L3.5 3.8z" fill="#c0c0c0"/></svg>
<svg style="position:absolute;left:772px;top:208px;" width="19" height="20" viewBox="0 0 19 20"><rect x="1.5" y="3.5" width="16" height="13" fill="#eceef2" stroke="#a8a8ae"/><path d="M4 7h11M4 10h11M4 13h11" stroke="#c0c0c8"/><path d="M9.5 0v4M9.5 16v4" stroke="#8a8a8a" stroke-width="1.4"/></svg>
<div style="position:absolute;left:795.0px;top:212.4px;font-family:'Liberation Sans',sans-serif;font-size:12.5px;line-height:12.5px;color:#8f8f8f;white-space:pre;letter-spacing:0.26px;">Выровнять текст</div>
<svg style="position:absolute;left:901px;top:216px;" width="7" height="4" viewBox="0 0 7 4"><path d="M0 0h7L3.5 3.8z" fill="#c0c0c0"/></svg>
<svg style="position:absolute;left:772px;top:233px;" width="19" height="20" viewBox="0 0 19 20"><path d="M1 2h12l3 4H4z" fill="#d8d8dc" stroke="#a8a8ae"/><rect x="6.5" y="9.5" width="12" height="10" fill="#f0f0f2" stroke="#a8a8ae"/><path d="M9 13h7M9 16h7" stroke="#bbb"/><path d="M1 7v7h4" stroke="#a8a8ae" fill="none"/></svg>
<div style="position:absolute;left:795.0px;top:237.9px;font-family:'Liberation Sans',sans-serif;font-size:12.5px;line-height:12.5px;color:#8f8f8f;white-space:pre;letter-spacing:0.36px;">Преобразовать в SmartArt</div>
<svg style="position:absolute;left:960px;top:241px;" width="7" height="4" viewBox="0 0 7 4"><path d="M0 0h7L3.5 3.8z" fill="#c0c0c0"/></svg>
<svg style="position:absolute;left:982px;top:184px;" width="159" height="69" viewBox="0 0 159 69"><rect x="0.5" y="0.5" width="158" height="68" fill="#fff" stroke="#c9ccd1"/><rect x="141.5" y="0.5" width="17" height="68" fill="#f4f5f7" stroke="#d3d6da"/><path d="M141.5 24.5h17M141.5 46.5h17" stroke="#d6d9dd"/><path d="M146 13l4.5-4 4.5 4z" fill="#c9c9c9"/><path d="M146 33h9l-4.5 4.5z" fill="#666"/><path d="M146 52h9" stroke="#666" stroke-width="1.3"/><path d="M146 55h9l-4.5 4.5z" fill="#666"/><rect x="3.5" y="3.5" width="17" height="14" fill="#dfe3ea" stroke="#555" stroke-width="1.3"/><path d="M6 14l3-8 3 8M7 11h4" stroke="#111" stroke-width="1.5" fill="none"/><path d="M13 8h6M13 11h6M6 15h13" stroke="#8a8fa0"/><path d="M28 4l15 14" stroke="#555" stroke-width="1.1"/><path d="M51 4l13 12" stroke="#555" stroke-width="1.1"/><path d="M66 18l-5-1 4-4z" fill="#222"/><rect x="73.5" y="4.5" width="18" height="13" fill="#e9ecf2" stroke="#555" stroke-width="1.1"/><ellipse cx="105" cy="11" rx="8.5" ry="6.5" fill="#e9ecf2" stroke="#555" stroke-width="1.1"/><rect x="118.5" y="4.5" width="18" height="13" rx="3" fill="#e9ecf2" stroke="#555" stroke-width="1.1"/><g transform="translate(0,9)"><path d="M4 31l7-14 7 14z" fill="#e9ecf2" stroke="#555" stroke-width="1.1"/><path d="M27 18h7v13h8" fill="none" stroke="#555" stroke-width="1.1"/><path d="M50 18h7v13h8" fill="none" stroke="#555" stroke-width="1.1"/><path d="M67 31l-4-2.5v5z" fill="#222"/><path d="M73.5 21.5h9v-4l7.5 7-7.5 7v-4h-9z" fill="#e9ecf2" stroke="#555" stroke-width="1.1"/><path d="M100.5 17.5h8v8h4l-8 7-8-7h4z" fill="#e9ecf2" stroke="#555" stroke-width="1.1"/><path d="M120 24l5-6h7a4 4 0 0 1 0 6 4 4 0 0 1 0 7h-12z" fill="#e9ecf2" stroke="#555" stroke-width="1.1"/></g><g transform="translate(0,9)"><path d="M12 39c-5 2 0 5-2 7s3 5 1 8c-1 2 3 3 2 4" fill="none" stroke="#555" stroke-width="1.1"/><path d="M28 41c7 0 13 5 14 12" fill="none" stroke="#555" stroke-width="1.1"/><path d="M51 52c3-8 5-11 8-11s5 10 9 11" fill="none" stroke="#555" stroke-width="1.1"/><path d="M86 40c-3 0-3 1-3 5s0 5-3 6c3 1 3 2 3 6s0 5 3 5" fill="none" stroke="#555" stroke-width="1.1"/><path d="M101 40c3 0 3 1 3 5s0 5 3 6c-3 1-3 2-3 6s0 5-3 5" fill="none" stroke="#555" stroke-width="1.1"/><path d="M127 39l2.6 6 6.4.4-5 4 1.7 6.4-5.7-3.6-5.7 3.6 1.7-6.4-5-4 6.4-.4z" fill="#e9ecf2" stroke="#555" stroke-width="1.1"/></g></svg>
<svg style="position:absolute;left:1169px;top:183px;" width="36" height="36" viewBox="0 0 36 36"><rect x="6.5" y="6.5" width="20" height="20" fill="#f0dc6a" stroke="#c8b440"/><rect x="0.5" y="0.5" width="15" height="15" fill="url(#gg)" stroke="#444" stroke-width="1.2"/><rect x="18.5" y="18.5" width="16" height="16" fill="url(#gg)" stroke="#444" stroke-width="1.2"/><defs><linearGradient id="gg" x1="0" y1="0" x2="0" y2="1"><stop offset="0" stop-color="#e4e4e6"/><stop offset="0.5" stop-color="#c8c8cc"/><stop offset="1" stop-color="#e6e6ea"/></linearGradient></defs></svg>
<div style="position:absolute;left:1146.0px;top:226.4px;font-family:'Liberation Sans',sans-serif;font-size:12.5px;line-height:12.5px;color:#3d3d3d;white-space:pre;letter-spacing:0.76px;">Упорядочить</div>
<svg style="position:absolute;left:1184.5px;top:244px;" width="7" height="4" viewBox="0 0 7 4"><path d="M0 0h7L3.5 3.8z" fill="#444"/></svg>
<svg style="position:absolute;left:1265px;top:184px;" width="35" height="35" viewBox="0 0 35 35"><rect x="1" y="1" width="31" height="31" rx="6" fill="#dcdadd" stroke="#cfcdd0"/><path d="M33 14L20 32" stroke="#bdbbbf" stroke-width="4"/><path d="M20 31l-4 3 2-5z" fill="#aaa"/></svg>
<div style="position:absolute;left:1235.0px;top:226.4px;font-family:'Liberation Sans',sans-serif;font-size:12.5px;line-height:12.5px;color:#8f8f8f;white-space:pre;letter-spacing:0.12px;">Экспресс-стили</div>
<svg style="position:absolute;left:1278px;top:244px;" width="7" height="4" viewBox="0 0 7 4"><path d="M0 0h7L3.5 3.8z" fill="#c8c8c8"/></svg>
<svg style="position:absolute;left:1337px;top:183px;" width="19" height="18" viewBox="0 0 19 18"><path d="M3 8l6-6 7 7-6 6z" fill="#eee" stroke="#9a9a9a" stroke-width="1.2"/><path d="M8 1l3 3" stroke="#999"/><path d="M1 16h16" stroke="#d8d8d8" stroke-width="3"/></svg>
<div style="position:absolute;left:1358.0px;top:186.9px;font-family:'Liberation Sans',sans-serif;font-size:12.5px;line-height:12.5px;color:#8f8f8f;white-space:pre;letter-spacing:0.43px;">Заливка фигуры</div>
<svg style="position:absolute;left:1463px;top:190px;" width="7" height="4" viewBox="0 0 7 4"><path d="M0 0h7L3.5 3.8z" fill="#c8c8c8"/></svg>
<svg style="position:absolute;left:1337px;top:208px;" width="19" height="19" viewBox="0 0 19 19"><path d="M2 3h9M2 3v11h14V9" stroke="#8a8a8a" stroke-width="1.3" fill="none"/><path d="M7 11l9-9 2 2-9 9-3 1z" fill="#eee" stroke="#777" stroke-width="1.2"/><rect x="1" y="15.5" width="17" height="3" fill="#777"/></svg>
<div style="position:absolute;left:1358.0px;top:212.4px;font-family:'Liberation Sans',sans-serif;font-size:12.5px;line-height:12.5px;color:#8f8f8f;white-space:pre;letter-spacing:0.55px;">Контур фигуры</div>
<svg style="position:absolute;left:1456px;top:216px;" width="7" height="4" viewBox="0 0 7 4"><path d="M0 0h7L3.5 3.8z" fill="#c8c8c8"/></svg>
<svg style="position:absolute;left:1337px;top:234px;" width="19" height="17" viewBox="0 0 19 17"><ellipse cx="9" cy="11" rx="8" ry="5" fill="#d6d6d8"/><rect x="2.5" y="2.5" width="13" height="10" rx="3" fill="#f2f2f4" stroke="#b8b8bc"/></svg>
<div style="position:absolute;left:1358.0px;top:237.9px;font-family:'Liberation Sans',sans-serif;font-size:12.5px;line-height:12.5px;color:#8f8f8f;white-space:pre;letter-spacing:0.32px;">Эффекты фигур</div>
<svg style="position:absolute;left:1462px;top:241px;" width="7" height="4" viewBox="0 0 7 4"><path d="M0 0h7L3.5 3.8z" fill="#c8c8c8"/></svg>
<svg style="position:absolute;left:1488px;top:184px;" width="19" height="17" viewBox="0 0 19 17"><rect x="1" y="5" width="6.5" height="11" rx="1.5" fill="#3a6fd0" stroke="#1f3f90"/><rect x="11" y="5" width="6.5" height="11" rx="1.5" fill="#3a6fd0" stroke="#1f3f90"/><rect x="2" y="1" width="4.5" height="5" fill="#2850a8"/><rect x="12" y="1" width="4.5" height="5" fill="#2850a8"/><rect x="7" y="7" width="4" height="4" fill="#3060c0"/><path d="M2.5 8v5M12.5 8v5" stroke="#bcd4ff"/></svg>
<div style="position:absolute;left:1511.0px;top:186.9px;font-family:'Liberation Sans',sans-serif;font-size:12.5px;line-height:12.5px;color:#3d3d3d;white-space:pre;letter-spacing:0.58px;">Найти</div>
<svg style="position:absolute;left:1487px;top:209px;" width="20" height="19" viewBox="0 0 20 19"><text x="0" y="9" font-family="Liberation Serif" font-size="10" fill="#555">ab</text><text x="7" y="18" font-family="Liberation Sans" font-weight="bold" font-size="10" fill="#3a8a3a">ac</text><path d="M2 11v4h4" stroke="#2a5ac0" stroke-width="1.3" fill="none"/></svg>
<div style="position:absolute;left:1511.0px;top:212.4px;font-family:'Liberation Sans',sans-serif;font-size:12.5px;line-height:12.5px;color:#3d3d3d;white-space:pre;letter-spacing:0.40px;">Заменить</div>
<svg style="position:absolute;left:1575px;top:216px;" width="7" height="4" viewBox="0 0 7 4"><path d="M0 0h7L3.5 3.8z" fill="#444"/></svg>
<svg style="position:absolute;left:1491px;top:233px;" width="15" height="19" viewBox="0 0 15 19"><path d="M1.5 1.5v14l3.5-3.5 3 6 2.5-1.2-3-6h5z" fill="#fff" stroke="#333" stroke-width="1.1" stroke-linejoin="round"/></svg>
<div style="position:absolute;left:1511.0px;top:237.9px;font-family:'Liberation Sans',sans-serif;font-size:12.5px;line-height:12.5px;color:#3d3d3d;white-space:pre;letter-spacing:-0.09px;">Выделить</div>
<svg style="position:absolute;left:1573px;top:241px;" width="7" height="4" viewBox="0 0 7 4"><path d="M0 0h7L3.5 3.8z" fill="#444"/></svg>
<div style="position:absolute;left:14px;top:277px;width:260px;height:604px;background:linear-gradient(90deg,#dfe2e6,#d9dce1)"></div>
<div style="position:absolute;left:14px;top:281px;width:254px;height:24px;background:linear-gradient(#d7dade,#cdd1d6);border-bottom:1px solid #b9bdc3"></div>
<div style="position:absolute;left:14px;top:281px;width:91px;height:24px;background:linear-gradient(#f3f4f6,#e3e6ea);border-right:1px solid #aeb2b8"></div>
<div style="position:absolute;left:105px;top:281px;width:93px;height:24px;background:linear-gradient(#d4d7dc,#c5c9cf);border-right:1px solid #b3b7bd;border-bottom:1px solid #b3b7bd"></div>
<div style="position:absolute;left:35.0px;top:287.5px;font-family:'Liberation Sans',sans-serif;font-size:13.0px;line-height:13.0px;color:#4a4a4a;white-space:pre;letter-spacing:0.12px;">Слайды</div>
<div style="position:absolute;left:121.0px;top:287.5px;font-family:'Liberation Sans',sans-serif;font-size:13.0px;line-height:13.0px;color:#555;white-space:pre;letter-spacing:0.29px;">Структура</div>
<svg style="position:absolute;left:251px;top:287px;" width="12" height="12" viewBox="0 0 12 12"><path d="M2 2l8 8M10 2l-8 8" stroke="#3c3c3c" stroke-width="2.2"/></svg>
<div style="position:absolute;left:269px;top:277px;width:5px;height:604px;background:linear-gradient(90deg,#c8ccd2,#f4f5f7 40%,#eef0f3)"></div>
<div style="position:absolute;left:249px;top:305px;width:20px;height:576px;background:linear-gradient(90deg,#e1e4e8,#e9ebee)"></div>
<svg style="position:absolute;left:253px;top:312px;" width="11" height="6" viewBox="0 0 11 6"><path d="M0 6L5.5 0 11 6z" fill="#3c3c3c"/></svg>
<div style="position:absolute;left:250px;top:325px;width:17px;height:78px;background:linear-gradient(90deg,#f0f1f3,#e3e5e8 60%,#dadde1);border:1px solid #8e949b;border-radius:1px"></div>
<svg style="position:absolute;left:253px;top:359px;" width="11" height="7" viewBox="0 0 11 7"><path d="M0 0.5h11M0 3h11M0 5.5h11" stroke="#7c8088" stroke-width="1"/></svg>
<div style="position:absolute;left:25.5px;top:319.4px;font-family:'Liberation Sans',sans-serif;font-size:12.5px;line-height:12.5px;color:#3d3d3d;white-space:pre;letter-spacing:0.00px;font-weight:bold;">1</div>
<div style="position:absolute;left:25.5px;top:447.4px;font-family:'Liberation Sans',sans-serif;font-size:12.5px;line-height:12.5px;color:#3d3d3d;white-space:pre;letter-spacing:0.00px;font-weight:bold;">2</div>
<div style="position:absolute;left:25.5px;top:575.4px;font-family:'Liberation Sans',sans-serif;font-size:12.5px;line-height:12.5px;color:#3d3d3d;white-space:pre;letter-spacing:0.00px;font-weight:bold;">3</div>
<div style="position:absolute;left:25.5px;top:703.4px;font-family:'Liberation Sans',sans-serif;font-size:12.5px;line-height:12.5px;color:#3d3d3d;white-space:pre;letter-spacing:0.00px;font-weight:bold;">4</div>
<div style="position:absolute;left:25.5px;top:831.4px;font-family:'Liberation Sans',sans-serif;font-size:12.5px;line-height:12.5px;color:#3d3d3d;white-space:pre;letter-spacing:0.00px;font-weight:bold;">5</div>
<div style="position:absolute;left:41.5px;top:314px;width:200px;height:112px;background:#fcfaf6;box-shadow:0 1px 3px rgba(0,0,0,.35)"></div>
<div style="position:absolute;left:123.0px;top:338.5px;font-family:'Liberation Sans',sans-serif;font-size:12.2px;line-height:12.2px;color:#1e1e1e;white-space:pre;letter-spacing:0.00px;font-weight:bold;">ISRAEL</div>
<div style="position:absolute;left:79.0px;top:356.7px;font-family:'Liberation Sans',sans-serif;font-size:12.2px;line-height:12.2px;color:#1e1e1e;white-space:pre;letter-spacing:0.38px;font-weight:bold;">TRAUMA COALITION</div>
<div style="position:absolute;left:90.5px;top:373.7px;font-family:'Liberation Sans',sans-serif;font-size:10.0px;line-height:10.0px;color:#222;white-space:pre;letter-spacing:-0.04px;">Hope  Builds  Resilience</div>
<div style="position:absolute;left:88px;top:393px;width:112px;height:1px;background:#999;opacity:.6"></div>
<div style="position:absolute;left:75px;top:396px;width:138px;height:1px;background:#777;opacity:.6"></div>
<div style="position:absolute;left:41.5px;top:404px;width:200px;height:22px;background:linear-gradient(90deg,#fff,#fbfaf6 70%,#e9f1f8)"></div>
<div style="position:absolute;left:45px;top:416px;width:190px;height:1px;background:#e6e2d8"></div>
<svg style="position:absolute;left:54px;top:408px;" width="16" height="16" viewBox="0 0 16 16"><circle cx="8" cy="8" r="6" fill="none" stroke="#c0394a" stroke-width="1.4" stroke-dasharray="2 1.5"/><text x="4" y="10.5" font-size="6" font-family="Liberation Sans" fill="#334">ITC</text></svg>
<div style="position:absolute;left:183px;top:406px;width:40px;height:10px;background:linear-gradient(90deg,rgba(180,210,235,.6),rgba(220,230,240,.3))"></div>
<div style="position:absolute;left:185px;top:415px;width:36px;height:2px;background:#556"></div>
<div style="position:absolute;left:186px;top:419px;width:30px;height:1px;background:#99a"></div>
<div style="position:absolute;left:17.5px;top:436px;width:228.5px;height:122.5px;background:linear-gradient(#fde7a0,#fbd86c 60%,#fce58a);border:1px solid #e2b550;border-radius:3px"></div>
<div style="position:absolute;left:41.5px;top:441px;width:200px;height:113.5px;background:#fff;border:1px solid #d6b060"></div>
<svg style="position:absolute;left:115.7px;top:455.2px;" width="57" height="31.4" viewBox="0 0 284 159"><defs>
<linearGradient id="bgA1" x1="0" y1="0" x2="0" y2="1"><stop offset="0" stop-color="#f3e7c2"/><stop offset="0.22" stop-color="#ede6cf"/><stop offset="0.5" stop-color="#d9e0e6"/><stop offset="1" stop-color="#cfd0e0"/></linearGradient>
<linearGradient id="bgB1" x1="0" y1="0" x2="1" y2="0"><stop offset="0" stop-color="#9cbce4" stop-opacity=".65"/><stop offset="0.3" stop-color="#b8cce4" stop-opacity=".3"/><stop offset="0.55" stop-color="#e0e0e4" stop-opacity="0"/><stop offset="1" stop-color="#d6d2de" stop-opacity=".5"/></linearGradient>
<radialGradient id="org1" cx="0.35" cy="0.3" r="0.8"><stop offset="0" stop-color="#f78a3a"/><stop offset="0.45" stop-color="#e25a1e"/><stop offset="1" stop-color="#b8300e"/></radialGradient>
<radialGradient id="blh1" cx="0.55" cy="0.2" r="0.8"><stop offset="0" stop-color="#4a948a"/><stop offset="0.5" stop-color="#2c5e5c"/><stop offset="1" stop-color="#18303a"/></radialGradient>
<linearGradient id="blb1" x1="0" y1="0" x2="0.3" y2="1"><stop offset="0" stop-color="#24506a"/><stop offset="0.5" stop-color="#1e3862"/><stop offset="1" stop-color="#1c2a58"/></linearGradient>
<filter id="fb1" x="-5%" y="-5%" width="110%" height="110%"><feGaussianBlur stdDeviation="1.1"/></filter>
<filter id="fs1" x="-20%" y="-20%" width="140%" height="140%"><feGaussianBlur stdDeviation="5"/></filter>
</defs>
<rect width="284" height="159" fill="url(#bgA1)"/>
<rect width="284" height="159" fill="url(#bgB1)"/>
<g filter="url(#fs1)">
<ellipse cx="85" cy="18" rx="60" ry="16" fill="#f8e4b2" opacity=".9"/>
<ellipse cx="20" cy="70" rx="30" ry="25" fill="#a8d0ea" opacity=".8"/>
<ellipse cx="25" cy="150" rx="45" ry="18" fill="#9a88d0" opacity=".8"/>
<ellipse cx="260" cy="150" rx="40" ry="15" fill="#c8b8d8" opacity=".6"/>
</g>
<g filter="url(#fb1)">
<path d="M0 116 L10 110 L16 124 L10 136 L0 138z" fill="#4e4452"/>
<path d="M18 126 L34 116 L52 124 L62 146 L44 156 L24 152 L14 140z" fill="#4c4250"/>
<path d="M12 100 L28 96 L34 108 L22 114z" fill="#5a5068" opacity=".8"/>
<path d="M14 146 L40 140 L48 152 L22 156z" fill="#d8d4e8" opacity=".8"/>
<path d="M36 104 L50 98 L56 112 L42 116z" fill="#7a6e8a" opacity=".7"/>
<path d="M232 122 L242 118 L246 130 L236 134z" fill="#7a5a52"/>
<path d="M262 126 L274 122 L278 136 L266 138z" fill="#8a6a60"/>
<path d="M278 98 L284 96 L284 114 L278 112z" fill="#8a6a60"/>
<path d="M232 142 L262 136 L270 146 L240 152z" fill="#e4dce4"/>
<path d="M246 152 L276 148 L284 159 H246z" fill="#a898b0" opacity=".7"/>
<path d="M55 159 C52 130 56 104 72 90 C86 80 96 76 104 70 C116 78 130 80 142 74 C154 90 160 112 158 159z" fill="url(#blb1)"/>
<path d="M104 30 L150 52 L142 72 C138 84 122 92 106 90 C90 84 88 60 104 30z" fill="#22505c"/>
<ellipse cx="128" cy="45" rx="33" ry="24" transform="rotate(38 128 45)" fill="url(#blh1)"/>
<path d="M118 30 C124 26 132 28 134 32" stroke="#6aaaa0" stroke-width="1.5" fill="none" opacity=".6"/>
<path d="M160 159 C158 128 162 106 174 94 C180 88 182 82 178 76 C168 72 160 62 158 50 C156 34 166 22 182 22 C198 22 208 34 206 50 C205 60 204 66 206 72 C216 82 228 94 234 110 C238 128 238 146 236 159z" fill="url(#org1)"/>
<path d="M196 30 C204 40 206 56 200 70" stroke="#c8401a" stroke-width="5" fill="none" opacity=".5"/>
<path d="M115 98 C120 90 132 92 136 102 C138 114 132 126 124 124 C116 120 112 108 115 98z" fill="#e8702e"/>
<path d="M130 114 C146 126 164 140 186 159" stroke="#e05820" stroke-width="13" fill="none" stroke-linecap="round"/>
<path d="M150 102 C160 96 172 100 178 108 C176 120 166 128 154 130 C150 122 148 110 150 102z" fill="#2a5e74"/>
<path d="M160 108 C166 106 170 110 170 116 C166 122 160 122 158 118z" fill="#a8c8d8" opacity=".7"/>
<path d="M62 112 l14 10 -2 4 -14-10z" fill="#d8e0f0"/>
<path d="M218 120 l4 2 -2 8 -4-2z" fill="#f0e8e8"/>
</g></svg>
<div style="position:absolute;left:63.6px;top:499.2px;width:41.5px;height:25.2px;background:#4f7fbd;border-radius:2px"></div>
<div style="position:absolute;left:63.6px;top:505px;width:41.5px;text-align:center;font-family:'Liberation Serif',serif;font-size:6.2px;line-height:6.5px;color:#e8eef8">Емоційна<br>реакція</div>
<div style="position:absolute;left:123.8px;top:499.2px;width:41.5px;height:25.2px;background:#4f7fbd;border-radius:2px"></div>
<div style="position:absolute;left:123.8px;top:505px;width:41.5px;text-align:center;font-family:'Liberation Serif',serif;font-size:6.2px;line-height:6.5px;color:#e8eef8">Когнітивна<br>інтерпретація</div>
<div style="position:absolute;left:184px;top:499.2px;width:41.5px;height:25.2px;background:#4f7fbd;border-radius:2px"></div>
<div style="position:absolute;left:184.0px;top:505px;width:41.5px;text-align:center;font-family:'Liberation Serif',serif;font-size:6.2px;line-height:6.5px;color:#e8eef8">Емпатійна<br>турбота</div>
<svg style="position:absolute;left:110px;top:506px;" width="9" height="10" viewBox="0 0 9 10"><path d="M0 3h5V0l4 5-4 5V7H0z" fill="#a8b8d8"/></svg>
<svg style="position:absolute;left:170.5px;top:506px;" width="9" height="10" viewBox="0 0 9 10"><path d="M0 3h5V0l4 5-4 5V7H0z" fill="#a8b8d8"/></svg>
<div style="position:absolute;left:41.5px;top:569px;width:200px;height:112px;background:#fff;box-shadow:0 1px 3px rgba(0,0,0,.35)"></div>
<div style="position:absolute;left:50.2px;top:594.6px;width:58.5px;height:76px;background:#4f7fbd;border-radius:6px"></div>
<div style="position:absolute;left:66.2px;top:599px;width:26px;height:26px;border-radius:50%;border:2px solid #e8ecf4;background:radial-gradient(circle at 50% 45%,#b89a90,#5a4a48 70%)"></div>
<div style="position:absolute;left:112.6px;top:594.6px;width:58.5px;height:76px;background:#4f7fbd;border-radius:6px"></div>
<div style="position:absolute;left:128.6px;top:599px;width:26px;height:26px;border-radius:50%;border:2px solid #e8ecf4;background:radial-gradient(circle at 50% 45%,#b89a90,#5a4a48 70%)"></div>
<div style="position:absolute;left:173.9px;top:594.6px;width:58.5px;height:76px;background:#4f7fbd;border-radius:6px"></div>
<div style="position:absolute;left:189.9px;top:599px;width:26px;height:26px;border-radius:50%;border:2px solid #e8ecf4;background:radial-gradient(circle at 50% 45%,#b89a90,#5a4a48 70%)"></div>
<div style="position:absolute;left:128.6px;top:599px;width:26px;height:26px;border-radius:50%;border:2px solid #e8ecf4;background:radial-gradient(circle at 50% 45%,#d8a0c8,#6a5a9a 70%)"></div>
<div style="position:absolute;left:189.9px;top:599px;width:26px;height:26px;border-radius:50%;border:2px solid #e8ecf4;background:radial-gradient(circle at 50% 45%,#e8c8b0,#a08878 70%)"></div>
<div style="position:absolute;left:50.2px;top:636px;width:58.5px;text-align:center;font-family:'Liberation Serif',serif;font-weight:bold;font-size:6.3px;line-height:8px;color:#f0f4fa">Вигорання</div>
<div style="position:absolute;left:112.6px;top:631px;width:58.5px;text-align:center;font-family:'Liberation Serif',serif;font-weight:bold;font-size:6.3px;line-height:8px;color:#f0f4fa">Втома від<br>співчуття</div>
<div style="position:absolute;left:173.9px;top:631px;width:58.5px;text-align:center;font-family:'Liberation Serif',serif;font-weight:bold;font-size:6.3px;line-height:8px;color:#f0f4fa">Вторинна<br>травматизація</div>
<svg style="position:absolute;left:53px;top:654px;" width="176" height="13" viewBox="0 0 176 13"><path d="M0 6.5L8 0v4h160V0l8 6.5-8 6.5V9H8v4z" fill="#c8d0ec" stroke="#e6e9f6"/></svg>
<div style="position:absolute;left:41.5px;top:696px;width:200px;height:112px;background:#fff;box-shadow:0 1px 3px rgba(0,0,0,.35)"></div>
<div style="position:absolute;left:55.4px;top:722.8px;width:67.6px;height:59px;background:#3c66b4"></div>
<svg style="position:absolute;left:55.4px;top:722.8px;" width="68" height="59" viewBox="0 0 68 59"><g stroke="#d8b080" stroke-width="1.2"><path d="M8 14v40M20 14v40M32 20v34M46 22v32"/></g><g fill="#e8703a"><ellipse cx="8" cy="12" rx="3.5" ry="6"/><ellipse cx="20" cy="12" rx="3.5" ry="6"/><ellipse cx="32" cy="19" rx="4" ry="7"/><ellipse cx="46" cy="22" rx="4.5" ry="8"/></g><g fill="#222"><ellipse cx="8" cy="13" rx="2" ry="3"/><ellipse cx="20" cy="13" rx="2" ry="3"/><ellipse cx="32" cy="20" rx="2.5" ry="3.5"/></g><path d="M58 54V36c0-6-6-6-7-2" stroke="#222" stroke-width="2.5" fill="none"/><path d="M60 8c-3 4 3 8 0 12s3 6 0 9" stroke="#fff" stroke-width="1.5" fill="none"/></svg>
<div style="position:absolute;font-family:'Liberation Serif',serif;font-size:4.3px;line-height:5.6px;text-align:justify;text-align-last:left;color:#444;width:100px;left:130px;top:702px;text-indent:14px">Вигорання пов'язане зі стійким стресом на робочому місці. Міжнародна класифікація хвороб (МКБ-11) відносить вигорання до професійних явищ. Воно не класифікується як медичний стан, проте має значні наслідки для здоров'я працівників.</div>
<div style="position:absolute;font-family:'Liberation Serif',serif;font-size:4.3px;line-height:5.6px;text-align:justify;text-align-last:left;color:#444;width:100px;left:130px;top:740px;font-weight:bold;color:#222">Згідно з ВООЗ, ВИГОРАННЯ - це синдром, що виникає в результаті хронічного стресу на робочому місці, з яким не вдалося успішно впоратися.</div>
<div style="position:absolute;font-family:'Liberation Serif',serif;font-size:4.3px;line-height:5.6px;text-align:justify;text-align-last:left;color:#444;width:100px;left:130px;top:770px;color:#555">Аспекти вигорання:<br>&nbsp;1.&nbsp;&nbsp; Почуття виснаження або втоми<br>&nbsp;2.&nbsp;&nbsp; Дистанціювання і негативне ставлення до роботи<br>&nbsp;3.&nbsp;&nbsp; Зниження професійної ефективності</div>
<div style="position:absolute;left:41.5px;top:823px;width:200px;height:58px;background:#fff;box-shadow:0 1px 3px rgba(0,0,0,.35)"></div>
<div style="position:absolute;left:88.0px;top:828.5px;font-family:'Liberation Serif',serif;font-size:6.5px;line-height:6.5px;color:#e23a3a;white-space:pre;letter-spacing:1.09px;">Фізіологічні маркери вигорання</div>
<div style="position:absolute;left:55.4px;top:844px;width:50px;height:37px;background:#f5c524"></div>
<svg style="position:absolute;left:55.4px;top:844px;" width="50" height="37" viewBox="0 0 50 37"><circle cx="25" cy="12" r="5" fill="#fff" opacity=".9"/><path d="M18 37c2-10 8-16 14-16 4 0 6 5 6 16z" fill="#e8661c"/><circle cx="33" cy="14" r="4" fill="#223"/></svg>
<div style="position:absolute;left:126px;top:846px;width:104px;font-family:'Liberation Serif',serif;font-size:4.3px;line-height:6px;text-align:justify;color:#333">•&nbsp;&nbsp;&nbsp;&nbsp;&nbsp;&nbsp;&nbsp; хронічне виснаження та фізична втома; безсоння<br>•&nbsp;&nbsp;&nbsp;&nbsp;&nbsp;&nbsp;&nbsp; частий безпричинний головний біль, м'язова напруга, розлади травлення<br>•&nbsp;&nbsp;&nbsp;&nbsp;&nbsp;&nbsp;&nbsp; різкі перепади ваги або зміни апетиту, часті застуди</div>
<div style="position:absolute;left:274px;top:277px;width:1301px;height:603px;background:linear-gradient(180deg,#cfd2d7 0%,#cbcfd5 40%,#c5c8cd 75%,#bebfc4 100%)"></div>
<div style="position:absolute;left:274px;top:277px;width:1301px;height:7px;background:linear-gradient(#a9abb0,rgba(205,208,213,0))"></div>
<div style="position:absolute;left:432px;top:301px;width:988px;height:556px;background:#fff;box-shadow:0 0 9px 2px rgba(60,62,70,.33),2px 2px 4px rgba(0,0,0,.25)"></div>
<div style="position:absolute;left:14px;top:880px;width:1580px;height:1px;background:#f4f4f4"></div>
<div style="position:absolute;left:1575px;top:277px;width:19px;height:604px;background:linear-gradient(90deg,#e3e5e9,#eceef1)"></div>
<svg style="position:absolute;left:1578px;top:287px;" width="12" height="7" viewBox="0 0 12 7"><path d="M0 7L6 0 12 7z" fill="#3a3a3a"/></svg>
<div style="position:absolute;left:1576px;top:333px;width:17px;height:19px;background:linear-gradient(90deg,#f4f5f7,#e2e4e8);border:1px solid #8e949b"></div>
<svg style="position:absolute;left:1579px;top:339px;" width="11" height="7" viewBox="0 0 11 7"><path d="M0 0.5h11M0 3h11M0 5.5h11" stroke="#7c8088"/></svg>
<svg style="position:absolute;left:1578px;top:809px;" width="12" height="7" viewBox="0 0 12 7"><path d="M0 0h12L6 7z" fill="#777"/></svg>
<div style="position:absolute;left:1575px;top:821px;width:19px;height:1px;background:#cfd2d6"></div>
<svg style="position:absolute;left:1579px;top:826px;" width="10" height="10" viewBox="0 0 10 10"><path d="M0 4.5L5 0 10 4.5z M0 10l5-4.5 5 4.5z" fill="#222"/></svg>
<svg style="position:absolute;left:1579px;top:843px;" width="10" height="10" viewBox="0 0 10 10"><path d="M0 0h10L5 4.5z M0 5.5h10L5 10z" fill="#222"/></svg>
<svg style="position:absolute;left:799.6px;top:364.4px;" width="284.4" height="158.6" viewBox="0 0 284 159"><defs>
<linearGradient id="bgA11" x1="0" y1="0" x2="0" y2="1"><stop offset="0" stop-color="#f3e7c2"/><stop offset="0.22" stop-color="#ede6cf"/><stop offset="0.5" stop-color="#d9e0e6"/><stop offset="1" stop-color="#cfd0e0"/></linearGradient>
<linearGradient id="bgB11" x1="0" y1="0" x2="1" y2="0"><stop offset="0" stop-color="#9cbce4" stop-opacity=".65"/><stop offset="0.3" stop-color="#b8cce4" stop-opacity=".3"/><stop offset="0.55" stop-color="#e0e0e4" stop-opacity="0"/><stop offset="1" stop-color="#d6d2de" stop-opacity=".5"/></linearGradient>
<radialGradient id="org11" cx="0.35" cy="0.3" r="0.8"><stop offset="0" stop-color="#f78a3a"/><stop offset="0.45" stop-color="#e25a1e"/><stop offset="1" stop-color="#b8300e"/></radialGradient>
<radialGradient id="blh11" cx="0.55" cy="0.2" r="0.8"><stop offset="0" stop-color="#4a948a"/><stop offset="0.5" stop-color="#2c5e5c"/><stop offset="1" stop-color="#18303a"/></radialGradient>
<linearGradient id="blb11" x1="0" y1="0" x2="0.3" y2="1"><stop offset="0" stop-color="#24506a"/><stop offset="0.5" stop-color="#1e3862"/><stop offset="1" stop-color="#1c2a58"/></linearGradient>
<filter id="fb11" x="-5%" y="-5%" width="110%" height="110%"><feGaussianBlur stdDeviation="1.1"/></filter>
<filter id="fs11" x="-20%" y="-20%" width="140%" height="140%"><feGaussianBlur stdDeviation="5"/></filter>
</defs>
<rect width="284" height="159" fill="url(#bgA11)"/>
<rect width="284" height="159" fill="url(#bgB11)"/>
<g filter="url(#fs11)">
<ellipse cx="85" cy="18" rx="60" ry="16" fill="#f8e4b2" opacity=".9"/>
<ellipse cx="20" cy="70" rx="30" ry="25" fill="#a8d0ea" opacity=".8"/>
<ellipse cx="25" cy="150" rx="45" ry="18" fill="#9a88d0" opacity=".8"/>
<ellipse cx="260" cy="150" rx="40" ry="15" fill="#c8b8d8" opacity=".6"/>
</g>
<g filter="url(#fb11)">
<path d="M0 116 L10 110 L16 124 L10 136 L0 138z" fill="#4e4452"/>
<path d="M18 126 L34 116 L52 124 L62 146 L44 156 L24 152 L14 140z" fill="#4c4250"/>
<path d="M12 100 L28 96 L34 108 L22 114z" fill="#5a5068" opacity=".8"/>
<path d="M14 146 L40 140 L48 152 L22 156z" fill="#d8d4e8" opacity=".8"/>
<path d="M36 104 L50 98 L56 112 L42 116z" fill="#7a6e8a" opacity=".7"/>
<path d="M232 122 L242 118 L246 130 L236 134z" fill="#7a5a52"/>
<path d="M262 126 L274 122 L278 136 L266 138z" fill="#8a6a60"/>
<path d="M278 98 L284 96 L284 114 L278 112z" fill="#8a6a60"/>
<path d="M232 142 L262 136 L270 146 L240 152z" fill="#e4dce4"/>
<path d="M246 152 L276 148 L284 159 H246z" fill="#a898b0" opacity=".7"/>
<path d="M55 159 C52 130 56 104 72 90 C86 80 96 76 104 70 C116 78 130 80 142 74 C154 90 160 112 158 159z" fill="url(#blb11)"/>
<path d="M104 30 L150 52 L142 72 C138 84 122 92 106 90 C90 84 88 60 104 30z" fill="#22505c"/>
<ellipse cx="128" cy="45" rx="33" ry="24" transform="rotate(38 128 45)" fill="url(#blh11)"/>
<path d="M118 30 C124 26 132 28 134 32" stroke="#6aaaa0" stroke-width="1.5" fill="none" opacity=".6"/>
<path d="M160 159 C158 128 162 106 174 94 C180 88 182 82 178 76 C168 72 160 62 158 50 C156 34 166 22 182 22 C198 22 208 34 206 50 C205 60 204 66 206 72 C216 82 228 94 234 110 C238 128 238 146 236 159z" fill="url(#org11)"/>
<path d="M196 30 C204 40 206 56 200 70" stroke="#c8401a" stroke-width="5" fill="none" opacity=".5"/>
<path d="M115 98 C120 90 132 92 136 102 C138 114 132 126 124 124 C116 120 112 108 115 98z" fill="#e8702e"/>
<path d="M130 114 C146 126 164 140 186 159" stroke="#e05820" stroke-width="13" fill="none" stroke-linecap="round"/>
<path d="M150 102 C160 96 172 100 178 108 C176 120 166 128 154 130 C150 122 148 110 150 102z" fill="#2a5e74"/>
<path d="M160 108 C166 106 170 110 170 116 C166 122 160 122 158 118z" fill="#a8c8d8" opacity=".7"/>
<path d="M62 112 l14 10 -2 4 -14-10z" fill="#d8e0f0"/>
<path d="M218 120 l4 2 -2 8 -4-2z" fill="#f0e8e8"/>
</g></svg>
<div style="position:absolute;left:533.2px;top:585px;width:212.8px;height:127px;background:#4f81bd;border-radius:11px"></div>
<div style="position:absolute;left:533.2px;top:616px;width:212.8px;text-align:center;font-family:'Liberation Serif',serif;font-size:32px;line-height:33px;color:#fff">Емоційна<br>реакція</div>
<div style="position:absolute;left:835.5px;top:585px;width:212.8px;height:127px;background:#4f81bd;border-radius:11px"></div>
<div style="position:absolute;left:835.5px;top:616px;width:212.8px;text-align:center;font-family:'Liberation Serif',serif;font-size:32px;line-height:33px;color:#fff">Когнітивна<br>інтерпретація</div>
<div style="position:absolute;left:1137.5px;top:585px;width:212.8px;height:127px;background:#4f81bd;border-radius:11px"></div>
<div style="position:absolute;left:1137.5px;top:616px;width:212.8px;text-align:center;font-family:'Liberation Serif',serif;font-size:32px;line-height:33px;color:#fff">Емпатійна<br>турбота</div>
<svg style="position:absolute;left:769px;top:623px;" width="46" height="51" viewBox="0 0 46 51"><path d="M0 9.5h22V0l24 25.5L22 51V41.5H0z" fill="#a9bad6"/></svg>
<svg style="position:absolute;left:1071px;top:623px;" width="46" height="51" viewBox="0 0 46 51"><path d="M0 9.5h22V0l24 25.5L22 51V41.5H0z" fill="#a9bad6"/></svg>
<svg style="position:absolute;left:537px;top:578px;" width="14" height="22" viewBox="0 0 14 22"><path d="M1 1v16l4-3.8 3 6.5 2.6-1.2-3-6.3h5.6z" fill="#fff" stroke="#111" stroke-width="1.1" stroke-linejoin="round"/></svg>
<div style="position:absolute;left:0px;top:881px;width:1598px;height:72px;background:#000"></div>
<svg style="position:absolute;left:10px;top:899px;" width="33" height="21" viewBox="0 0 33 21"><rect x="1" y="1" width="21" height="19" rx="4.5" fill="none" stroke="#fff" stroke-width="2"/><path d="M23 8.5l8-5.5v15l-8-5.5z" fill="none" stroke="#fff" stroke-width="2" stroke-linejoin="round"/></svg>
<div style="position:absolute;left:6.5px;top:930.5px;font-family:'Liberation Sans',sans-serif;font-size:15.5px;line-height:15.5px;color:#fff;white-space:pre;letter-spacing:-0.09px;text-shadow:0.3px 0 0 #fff;">Video</div>
<svg style="position:absolute;left:66px;top:904.5px;" width="11" height="7" viewBox="0 0 11 7"><path d="M1.5 5.5L5.5 1.5 9.5 5.5" stroke="#fff" stroke-width="2" fill="none" stroke-linecap="round" stroke-linejoin="round"/></svg>
<svg style="position:absolute;left:525px;top:898px;" width="26" height="24" viewBox="0 0 26 24"><circle cx="7.5" cy="5.5" r="4" fill="none" stroke="#fff" stroke-width="2"/><path d="M2 21v-3a5.5 5.5 0 0 1 5.5-5.5h1" fill="none" stroke="#fff" stroke-width="2"/><path d="M2 21h7" stroke="#fff" stroke-width="2"/><circle cx="17" cy="10" r="4" fill="none" stroke="#fff" stroke-width="2"/><rect x="9" y="15.5" width="16" height="7" rx="3.5" fill="none" stroke="#fff" stroke-width="2"/></svg>
<div style="position:absolute;left:559.4px;top:898.9px;font-family:'Liberation Sans',sans-serif;font-size:15.5px;line-height:15.5px;color:#b4b4b4;white-space:pre;letter-spacing:-0.74px;text-shadow:0.45px 0 0 #b4b4b4;">46</div>
<svg style="position:absolute;left:598.5px;top:904px;" width="11" height="7" viewBox="0 0 11 7"><path d="M1.5 5.5L5.5 1.5 9.5 5.5" stroke="#fff" stroke-width="2" fill="none" stroke-linecap="round" stroke-linejoin="round"/></svg>
<div style="position:absolute;left:498.7px;top:930.5px;font-family:'Liberation Sans',sans-serif;font-size:15.5px;line-height:15.5px;color:#fff;white-space:pre;letter-spacing:-0.17px;text-shadow:0.3px 0 0 #fff;">Participants</div>
<svg style="position:absolute;left:660px;top:894px;" width="38" height="30" viewBox="0 0 38 30"><path d="M8 6.5c2-3 7-4 12-3.5" stroke="#fff" stroke-width="2" fill="none"/><path d="M12 8h4a8 8 0 0 1 0 16h-3l-6 4v-5a8 8 0 0 1 5-15z" fill="none" stroke="#fff" stroke-width="2" stroke-linejoin="round"/><circle cx="9.5" cy="16" r="1.4" fill="#fff"/><circle cx="14" cy="16" r="1.4" fill="#fff"/><circle cx="18.5" cy="16" r="1.4" fill="#fff"/></svg>
<svg style="position:absolute;left:680px;top:890px;" width="21" height="21" viewBox="0 0 21 21"><circle cx="10.5" cy="10.5" r="10" fill="#e8454c"/><text x="10.5" y="15.5" text-anchor="middle" font-family="Liberation Sans" font-weight="bold" font-size="13" fill="#fff">3</text></svg>
<svg style="position:absolute;left:711px;top:904.5px;" width="11" height="7" viewBox="0 0 11 7"><path d="M1.5 5.5L5.5 1.5 9.5 5.5" stroke="#fff" stroke-width="2" fill="none" stroke-linecap="round" stroke-linejoin="round"/></svg>
<div style="position:absolute;left:661.0px;top:930.5px;font-family:'Liberation Sans',sans-serif;font-size:15.5px;line-height:15.5px;color:#fff;white-space:pre;letter-spacing:-0.58px;text-shadow:0.3px 0 0 #fff;">Chat</div>
<svg style="position:absolute;left:766px;top:895px;" width="34" height="28" viewBox="0 0 34 28"><path d="M17 26C8 20 2.5 15 2.5 9a6.5 6.5 0 0 1 13-1 6.5 6.5 0 0 1 13 1C28.5 15 26 20 17 26z" fill="none" stroke="#fff" stroke-width="2" stroke-linejoin="round" transform="rotate(-10 17 14)"/></svg>
<div style="position:absolute;left:764.0px;top:930.5px;font-family:'Liberation Sans',sans-serif;font-size:15.5px;line-height:15.5px;color:#fff;white-space:pre;letter-spacing:-0.87px;text-shadow:0.3px 0 0 #fff;">React</div>
<div style="position:absolute;left:879px;top:896.6px;width:30px;height:25px;background:#1cdb87;border-radius:4px"></div>
<svg style="position:absolute;left:886px;top:900px;" width="16" height="17" viewBox="0 0 16 17"><path d="M8 1.5L2 8h4v7h4V8h4z" fill="#111"/></svg>
<div style="position:absolute;left:875.0px;top:930.5px;font-family:'Liberation Sans',sans-serif;font-size:15.5px;line-height:15.5px;color:#fff;white-space:pre;letter-spacing:-0.69px;text-shadow:0.3px 0 0 #fff;">Share</div>
<svg style="position:absolute;left:1001px;top:893px;" width="32" height="32" viewBox="0 0 32 32"><circle cx="16" cy="16" r="14.5" fill="none" stroke="#fff" stroke-width="2"/><circle cx="16" cy="9.5" r="1.8" fill="#fff"/><path d="M13 13.5h4v9M12.5 22.5h7" stroke="#fff" stroke-width="2.2" fill="none"/></svg>
<div style="position:absolute;left:974.0px;top:930.5px;font-family:'Liberation Sans',sans-serif;font-size:15.5px;line-height:15.5px;color:#fff;white-space:pre;letter-spacing:0.20px;text-shadow:0.3px 0 0 #fff;">Meeting info</div>
<svg style="position:absolute;left:1114px;top:895px;" width="30" height="28" viewBox="0 0 30 28"><circle cx="22" cy="6" r="4" fill="none" stroke="#fff" stroke-width="2"/><circle cx="6" cy="22" r="4" fill="none" stroke="#fff" stroke-width="2"/><path d="M2 11V6a4 4 0 0 1 4-4h5M27 17v5a4 4 0 0 1-4 4h-5" fill="none" stroke="#fff" stroke-width="2" stroke-linecap="round"/></svg>
<div style="position:absolute;left:1112.5px;top:930.5px;font-family:'Liberation Sans',sans-serif;font-size:15.5px;line-height:15.5px;color:#fff;white-space:pre;letter-spacing:-0.48px;text-shadow:0.3px 0 0 #fff;">Apps</div>
<svg style="position:absolute;left:1214px;top:893px;" width="32" height="32" viewBox="0 0 32 32"><circle cx="16" cy="16" r="14.5" fill="none" stroke="#fff" stroke-width="2"/><circle cx="10" cy="16" r="1.8" fill="#fff"/><circle cx="16" cy="16" r="1.8" fill="#fff"/><circle cx="22" cy="16" r="1.8" fill="#fff"/></svg>
<div style="position:absolute;left:1211.5px;top:930.5px;font-family:'Liberation Sans',sans-serif;font-size:15.5px;line-height:15.5px;color:#fff;white-space:pre;letter-spacing:0.46px;text-shadow:0.3px 0 0 #fff;">More</div>
</body></html>
